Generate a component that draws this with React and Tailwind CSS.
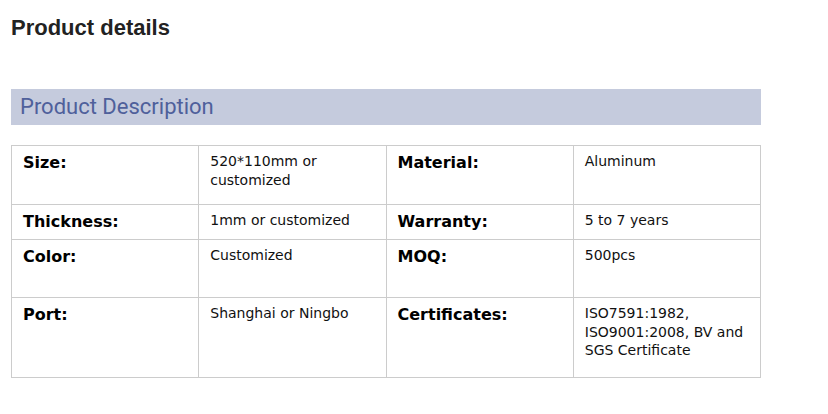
import React from 'react';

const rows = [
    { h: 'h-[59px]', a: 'Size:', av: '520*110mm or customized', b: 'Material:', bv: 'Aluminum' },
    { h: 'h-[35px]', a: 'Thickness:', av: '1mm or customized', b: 'Warranty:', bv: '5 to 7 years' },
    { h: 'h-[58px]', a: 'Color:', av: 'Customized', b: 'MOQ:', bv: '500pcs' },
    { h: 'h-[80px]', a: 'Port:', av: 'Shanghai or Ningbo', b: 'Certificates:', bv: 'ISO7591:1982, ISO9001:2008, BV and SGS Certificate' },
];

export default function App() {
    const label = "border border-[#cccccc] align-top pl-[11px] pt-[5px] pr-2 text-[16px] leading-[24px] font-bold text-black font-['DejaVu_Sans',sans-serif]";
    const value = "border border-[#cccccc] align-top pl-[11px] pt-[6px] pr-[6px] text-[14px] leading-[18.7px] text-[#111] font-['DejaVu_Sans',sans-serif]";

    return (
        <div className="w-[828px] h-[414px] bg-white px-[11px] pt-[15px]">
            <h2 className="text-[22px] leading-[26px] font-bold text-[#222] font-['Liberation_Sans',Arial,sans-serif]">
                Product details
            </h2>

            <div className="mt-[48px] w-[750px] h-[36px] bg-[#c5cbdd] flex items-center pl-[9px] pb-[2px]">
                <span className="text-[22px] text-[#4f609b] font-['Roboto',sans-serif]">Product Description</span>
            </div>

            <table className="mt-[20px] w-[750px] table-fixed border-collapse">
                <tbody>
                    {rows.map((r) => (
                        <tr key={r.a} className={r.h}>
                            <td className={label}>{r.a}</td>
                            <td className={value}>{r.av}</td>
                            <td className={label}>{r.b}</td>
                            <td className={value}>{r.bv}</td>
                        </tr>
                    ))}
                </tbody>
            </table>
        </div>
    );
}
